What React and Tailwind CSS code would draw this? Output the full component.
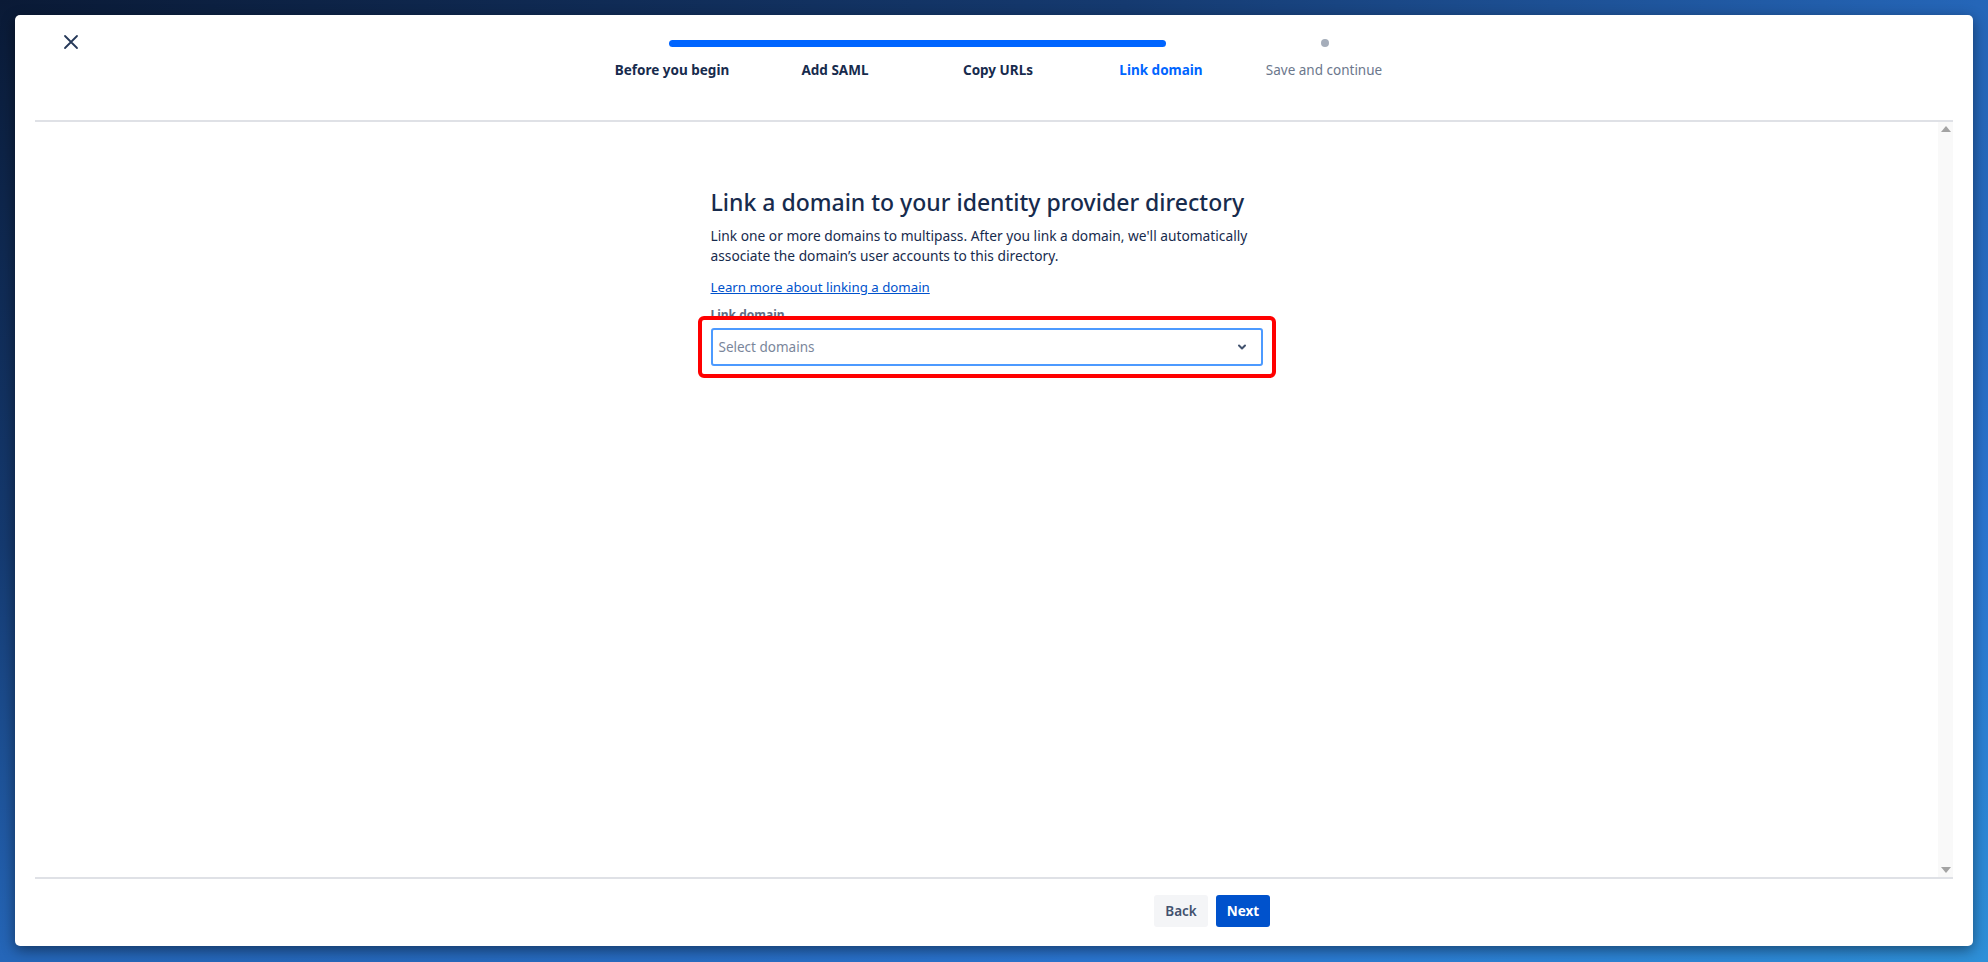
import React from "react";

const steps = [
  { label: "Before you begin", state: "done" },
  { label: "Add SAML", state: "done" },
  { label: "Copy URLs", state: "done" },
  { label: "Link domain", state: "current" },
  { label: "Save and continue", state: "todo" },
];

function CloseIcon() {
  return (
    <svg width="16" height="16" viewBox="0 0 16 16" fill="none">
      <path d="M2 2L14 14M14 2L2 14" stroke="#253858" strokeWidth="1.8" strokeLinecap="round" />
    </svg>
  );
}

function Chevron() {
  return (
    <svg width="10" height="10" viewBox="0 0 10 10" fill="none">
      <path d="M2 3.5L5 6.5L8 3.5" stroke="#42526E" strokeWidth="2" strokeLinecap="round" strokeLinejoin="round" />
    </svg>
  );
}

export default function App() {
  return (
    <div
      className="w-full h-[962px] p-[15px] bg-[radial-gradient(ellipse_at_top_left,#0a1a36_0%,#153a70_40%,#2a74cf_80%,#2e90d8_100%)]"
      style={{ fontFamily: '"Noto Sans", "Open Sans", sans-serif' }}
    >
      <div className="h-[931px] bg-white rounded-[5px] shadow-[0_4px_14px_rgba(0,0,0,0.45)] flex flex-col">
        {/* Header */}
        <div className="h-[105px] relative flex justify-center">
          <button className="absolute left-[48px] top-[19px] p-0">
            <CloseIcon />
          </button>
          <div className="w-[815px] pt-[25px] ml-[8px]">
            <div className="relative h-[7px]">
              <div className="absolute left-[78px] w-[497px] h-[7px] rounded-full bg-[#0065FF]" />
              <div className="absolute left-[730px] top-[-1px] w-[8px] h-[8px] rounded-full bg-[#A5ADBA]" />
            </div>
            <div className="flex mt-[14px]">
              {steps.map((s) => (
                <div
                  key={s.label}
                  className={`w-[163px] text-center text-[13.5px] leading-[18px] ${
                    s.state === "done"
                      ? "font-bold text-[#172B4D]"
                      : s.state === "current"
                      ? "font-bold text-[#0065FF]"
                      : "text-[#6B778C]"
                  }`}
                >
                  {s.label}
                </div>
              ))}
            </div>
          </div>
        </div>

        <div className="mx-[20px] h-[2px] bg-[#DFE1E6]" />

        {/* Body */}
        <div className="flex-1 mx-[20px] flex min-h-0">
          <div className="flex-1 pt-[66px]">
            <div className="w-[552px] mx-auto">
              <h2 className="text-[23px] leading-[28px] font-medium text-[#172B4D] whitespace-nowrap">
                Link a domain to your identity provider directory
              </h2>
              <p className="mt-[10px] text-[13.75px] leading-[20px] text-[#172B4D]">
                Link one or more domains to multipass. After you link a domain, we'll automatically
                associate the domain’s user accounts to this directory.
              </p>
              <a href="#" className="block mt-[11px] text-[13.25px] leading-[20px] text-[#0052CC] underline">
                Learn more about linking a domain
              </a>
              <div className="mt-[10px] text-[12px] leading-[16px] font-bold text-[#5E6C84]">Link domain</div>
              <div className="relative mt-[5px]">
                <div className="h-[38px] border-2 border-[#4C9AFF] rounded-[3px] bg-white flex items-center justify-between pl-[6px] pr-[14px]">
                  <span className="text-[13.5px] text-[#7A869A]">Select domains</span>
                  <Chevron />
                </div>
                <div className="absolute -left-[13px] -right-[13px] -top-[12px] -bottom-[12px] border-4 border-[#FF0000] rounded-[6px]" />
              </div>
            </div>
          </div>
          <div className="w-[15px] bg-[#F9F9F9] flex flex-col justify-between items-center py-[4px]">
            <div className="w-0 h-0 border-l-[5px] border-r-[5px] border-b-[6px] border-l-transparent border-r-transparent border-b-[#A3A3A3]" />
            <div className="w-0 h-0 border-l-[5px] border-r-[5px] border-t-[6px] border-l-transparent border-r-transparent border-t-[#A3A3A3]" />
          </div>
        </div>

        <div className="mx-[20px] h-[2px] bg-[#DFE1E6]" />

        {/* Footer */}
        <div className="h-[67px] pt-[16px]">
          <div className="w-[552px] mx-auto flex justify-end gap-[8px]">
            <button className="w-[54px] h-[32px] rounded-[3px] bg-[#F4F5F7] text-[13.5px] font-semibold text-[#42526E]">
              Back
            </button>
            <button className="w-[54px] h-[32px] rounded-[3px] bg-[#0052CC] text-[13.5px] font-bold text-white">
              Next
            </button>
          </div>
        </div>
      </div>
    </div>
  );
}
